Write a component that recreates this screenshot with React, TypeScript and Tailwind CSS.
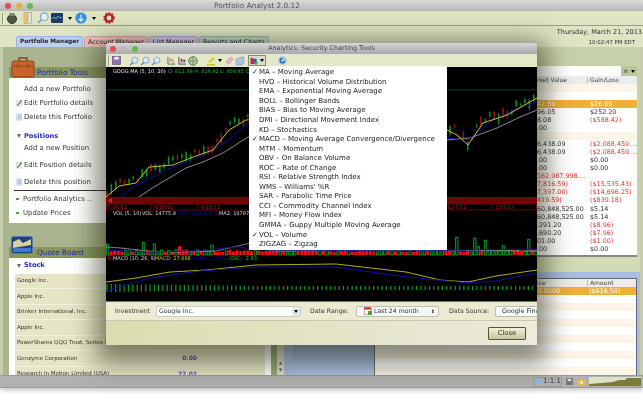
import type { ReactNode } from 'react'

const ui = "font-['DejaVu_Sans',sans-serif]"

type Pt = [number, number]

const yellowLine: Pt[] = [[106, 197], [119, 186], [136, 183], [149, 167], [173, 165], [193, 157], [213, 150], [229, 130], [246, 120], [300, 118], [400, 122], [447, 130], [457, 135], [468, 145], [483, 123], [507, 115], [537, 98]]
const blueLine: Pt[] = [[106, 207], [136, 185], [173, 167], [209, 153], [229, 140], [248, 123], [300, 120], [400, 126], [447, 138], [468, 140], [490, 122], [518, 108], [537, 102]]
const grayLine: Pt[] = [[125, 207], [149, 190], [186, 168], [203, 162], [223, 153], [248, 137], [300, 130], [400, 134], [447, 140], [470, 138], [497, 128], [520, 117], [537, 110]]

function toPoints(line: Pt[]) {
  return line.map(([x, y]) => `${x - 106},${y - 67}`).join(' ')
}

function yAt(line: Pt[], x: number) {
  for (let i = 1; i < line.length; i++) {
    if (x <= line[i][0]) {
      const [x0, y0] = line[i - 1]
      const [x1, y1] = line[i]
      return y0 + ((x - x0) / (x1 - x0)) * (y1 - y0)
    }
  }
  return line[line.length - 1][1]
}

// small seeded generator so the bars stay put between renders
function seeded(seed: number) {
  let s = seed
  return () => {
    s = (s * 16807) % 2147483647
    return s / 2147483647
  }
}

function PriceBars() {
  const rnd = seeded(41)
  const bars = []
  for (let x = 107; x < 537; x += 4.4) {
    const mid = yAt(yellowLine, x) - 67
    const up = rnd() > 0.4
    const top = mid - 2 - rnd() * 9
    const h = 5 + rnd() * 8
    bars.push(
      <g key={x} stroke={up ? '#0c9a26' : '#a01616'} fill={up ? '#0c9a26' : '#a01616'}>
        <line x1={x - 106} x2={x - 106} y1={top} y2={top + h} strokeWidth="0.5" />
        <rect x={x - 106.6} y={top + 2} width="1.2" height={h - 4} strokeWidth="0.2" />
      </g>,
    )
  }
  return <>{bars}</>
}

function VolumeBars() {
  const rnd = seeded(97)
  const bars = []
  for (let x = 106; x < 537; x += 3.6) {
    const red = rnd() > 0.45
    const tall = rnd() > (red ? 0.93 : 0.72)
    const h = tall ? 8 + rnd() * 10 : 3 + rnd() * 2.5
    bars.push(
      red ? (
        <rect key={x} x={x - 106} y={188 - h} width="3" height={h} fill="#f01010" />
      ) : (
        <rect key={x} x={x - 106 + 0.4} y={188 - h} width="2.4" height={h} fill="#021" stroke="#12a52a" strokeWidth="0.8" />
      ),
    )
  }
  return <>{bars}</>
}

function MacdBars() {
  const bars = []
  for (let x = 107; x < 537; x += 4.3) {
    const h = x < 250 ? 8 - (x - 107) / 40 : 4
    bars.push(<line key={x} x1={x - 106} x2={x - 106} y1={221 - h / 2} y2={221 + h / 2} stroke="#0e9a26" strokeWidth="1.2" />)
  }
  return <>{bars}</>
}

function SecurityChart() {
  const labelClass = 'text-[5px]'
  return (
    <svg viewBox="0 0 431 235" className={`block h-[235px] w-full bg-black ${ui}`}>
      <line x1="0" x2="431" y1="23" y2="23" stroke="#0c4a4a" strokeWidth="0.8" />
      <text x="7" y="5.5" fill="#e8e8e8" className={labelClass}>GOOG MA (5, 10, 20)</text>
      <text x="62" y="5.5" fill="#12c22e" className={labelClass}>O: 811.39  H: 816.92  L: 809.85  C: 815.71</text>
      <PriceBars />
      <polyline points={toPoints(grayLine)} fill="none" stroke="#9c9c9c" strokeWidth="0.9" />
      <polyline points={toPoints(blueLine)} fill="none" stroke="#10109c" strokeWidth="1" />
      <polyline points={toPoints(yellowLine)} fill="none" stroke="#c8c020" strokeWidth="1" />

      <rect x="0" y="130" width="431" height="7" fill="#6f0505" />
      <rect x="0.5" y="137" width="430" height="6" fill="#000" stroke="#7a0a0a" strokeWidth="0.8" />
      {[45, 92, 144, 338, 386].map((x) => (
        <line key={x} x1={x} x2={x} y1="137" y2="143" stroke="#7a0a0a" strokeWidth="0.8" />
      ))}
      <path d="M2 133.5 L6 131 L6 136 Z" fill="#e02020" />
      <g fill="#a81818" className="text-[5px]">
        <text x="2" y="142">7/26/12</text>
        <text x="48" y="142">8/18/12</text>
        <text x="95" y="142">9/18/12</text>
        <text x="341" y="142">12/7/11</text>
        <text x="389" y="142">1/18/13</text>
      </g>

      <text x="7" y="148" fill="#d8d8d8" className={labelClass}>VOL (5, 10)</text>
      <text x="36" y="148" fill="#d8d8d8" className={labelClass}>VOL: 14775.9</text>
      <text x="71" y="148" fill="#10109c" className={labelClass}>MA1: 19956.472</text>
      <text x="113" y="148" fill="#d8d8d8" className={labelClass}>MA2: 19787.6</text>
      <VolumeBars />
      <polyline points="0,180 15,181 40,184 70,185 110,184 145,176 165,184 300,183 431,184" fill="none" stroke="#9c9c9c" strokeWidth="0.8" />
      <polyline points="0,183 40,185 90,184 130,180 160,183 300,184 431,182" fill="none" stroke="#10109c" strokeWidth="0.9" />

      <rect x="2.5" y="188.5" width="3.5" height="3.5" fill="none" stroke="#b01818" strokeWidth="0.7" />
      <text x="7" y="193" fill="#d8d8d8" className={labelClass}>MACD (10, 26, 9)</text>
      <text x="49" y="193" fill="#c8c020" className={labelClass}>MACD: 27.688</text>
      <text x="85" y="193" fill="#10109c" className={labelClass}>SIGNAL: 30.518</text>
      <text x="124" y="193" fill="#12c22e" className={labelClass}>OSC: -2.83</text>
      <MacdBars />
      <polyline points="0,215 30,211 64,205 100,203 150,198 230,197 300,205 334,213 362,215 390,209 431,203" fill="none" stroke="#b4ac18" strokeWidth="1" />
      <polyline points="0,224 44,211 94,204 150,200 230,200 300,210 362,216 390,214 431,206" fill="none" stroke="#10109c" strokeWidth="1" />
      <line x1="0" x2="431" y1="234.5" y2="234.5" stroke="#d84060" strokeWidth="1" />
    </svg>
  )
}

function Magnifier({ tone = '#8fb0d8' }: { tone?: string }) {
  return (
    <svg viewBox="0 0 12 12" className="h-[10px] w-[10px]">
      <circle cx="7" cy="5" r="3.6" fill="#dbe8f6" stroke={tone} strokeWidth="1.3" />
      <line x1="4.4" y1="7.8" x2="1.4" y2="11" stroke="#5c7ca8" strokeWidth="1.6" />
    </svg>
  )
}

function Caret() {
  return <span className="inline-block h-0 w-0 border-x-[2px] border-t-[3px] border-x-transparent border-t-black" />
}

function Separator() {
  return <span className="h-[11px] w-[2px] border-x border-l-[#8f9778] border-r-[#f3f5e4]" />
}

function MainToolbar() {
  return (
    <div className="flex h-[15px] items-center border-b border-[#9aa085] bg-[#dfe5c2] pl-[2px]">
      <Separator />
      <svg viewBox="0 0 12 12" className="ml-[2px] h-[12px] w-[12px]">
        <circle cx="6" cy="7" r="4.5" fill="#4f5a44" stroke="#2f3629" />
        <rect x="3.5" y="1" width="5" height="3" fill="#7c8770" />
      </svg>
      <svg viewBox="0 0 10 12" className="ml-[5px] h-[12px] w-[10px]">
        <rect x="1" y="0.5" width="3" height="11" fill="#f1c878" stroke="#b8914c" strokeWidth="0.5" />
        <rect x="5" y="0.5" width="3.5" height="11" fill="#e8e4d8" stroke="#8e8a80" strokeWidth="0.5" />
      </svg>
      <svg viewBox="0 0 12 12" className="ml-[4px] h-[12px] w-[12px]">
        <circle cx="7.3" cy="4.7" r="3.8" fill="#e6f0f8" stroke="#7fa3c6" strokeWidth="1.2" />
        <line x1="4.4" y1="7.6" x2="1" y2="11" stroke="#7fa3c6" strokeWidth="1.6" />
      </svg>
      <svg viewBox="0 0 12 10" className="ml-[2px] h-[10px] w-[12px]">
        <rect width="12" height="10" rx="1" fill="#1c3c66" />
        <path d="M1 6 L3 4 L5 6 L7 3 L9 5 L11 4" stroke="#9ec0e8" strokeWidth="0.8" fill="none" />
      </svg>
      <span className="ml-[5px] flex"><Caret /></span>
      <svg viewBox="0 0 12 12" className="ml-[3px] h-[12px] w-[12px]">
        <circle cx="6" cy="6" r="5.6" fill="#2f8fd8" stroke="#7cbde8" strokeWidth="0.6" />
        <path d="M6 2.4 V9 M3.6 6.6 L6 9.2 L8.4 6.6" stroke="#f4f8fc" strokeWidth="1.1" fill="none" />
      </svg>
      <span className="ml-[5px] flex"><Caret /></span>
      <svg viewBox="0 0 12 12" className="ml-[7px] h-[12px] w-[12px]">
        <circle cx="6" cy="6" r="3.6" fill="none" stroke="#b8202c" strokeWidth="2.4" />
        <circle cx="6" cy="6" r="5" fill="none" stroke="#b8202c" strokeWidth="1.6" strokeDasharray="1.6 1.6" />
      </svg>
    </div>
  )
}

function ManagerTab({ label, className }: { label: string; className: string }) {
  return (
    <div className={`flex h-[11px] items-center rounded-t-[3px] border border-b-0 px-[3px] leading-none whitespace-nowrap text-[#222] ${className}`}>
      {label}
    </div>
  )
}

function Pencil() {
  return (
    <svg viewBox="0 0 8 8" className="h-[8px] w-[7px] shrink-0">
      <rect x="1" y="1" width="5.5" height="6.5" fill="#f4f4f0" stroke="#9a9a90" strokeWidth="0.4" />
      <path d="M1.5 7 L6.5 1" stroke="#2f8a2f" strokeWidth="1.3" />
    </svg>
  )
}

function PageIcon() {
  return (
    <svg viewBox="0 0 8 8" className="h-[8px] w-[7px] shrink-0">
      <rect x="1" y="0.5" width="5.5" height="7" fill="#e8f0fa" stroke="#7f9cc0" strokeWidth="0.5" />
      <path d="M2 2.5 H5.5 M2 4 H5.5 M2 5.5 H5" stroke="#3b6ca8" strokeWidth="0.5" />
    </svg>
  )
}

function ToolRow({ icon, label, className = '' }: { icon?: ReactNode; label: string; className?: string }) {
  return (
    <div className={`flex h-[10px] items-center text-[6.9px] leading-none whitespace-nowrap text-[#333] ${className}`}>
      <span className="flex w-[15px] justify-end pr-[1px]">{icon}</span>
      <span>{label}</span>
    </div>
  )
}

function GreenBullet({ label, className = '' }: { label: string; className?: string }) {
  return (
    <div className={`flex h-[10px] items-center gap-[4px] pl-[7px] text-[6.9px] leading-none whitespace-nowrap text-[#333] ${className}`}>
      <span className="h-[1.5px] w-[3px] bg-[#4c9a3a]" />
      {label}
    </div>
  )
}

function SectionTitle({ label, className = '' }: { label: string; className?: string }) {
  return (
    <div className={`flex h-[10px] items-center gap-[3px] pl-[8px] text-[6.6px] leading-none font-bold text-[#2626c8] ${className}`}>
      <span className="h-0 w-0 border-x-[2.5px] border-t-[4px] border-x-transparent border-t-[#666]" />
      {label}
    </div>
  )
}

function PanelHeader({ title, icon }: { title: string; icon: ReactNode }) {
  return (
    <div className="relative flex h-[11px] items-center bg-[#88985c] pl-[28px] text-[7.4px] leading-none text-[#2323b4]">
      <span className="absolute -top-[11px] left-[2px]">{icon}</span>
      {title}
    </div>
  )
}

const quotes = [
  { name: 'Google Inc.', value: '' },
  { name: 'Apple Inc.', value: '' },
  { name: 'Brinker International, Inc.', value: '' },
  { name: 'Apple Inc.', value: '' },
  { name: 'PowerShares QQQ Trust, Series 1', value: '' },
  { name: 'Genzyme Corporation', value: '0.00' },
  { name: 'Research In Motion Limited (USA)', value: '72.07' },
]

function LeftColumn() {
  return (
    <div className={`flex w-[281px] shrink-0 flex-col bg-[#a9b58f] pt-[20px] pl-[6px] ${ui}`}>
      <PanelHeader
        title="Portfolio Tools"
        icon={
          <svg viewBox="0 0 24 22" className="h-[22px] w-[24px]">
            <rect x="1" y="5" width="22" height="16" rx="2" fill="#c8642a" stroke="#8c4018" />
            <path d="M8 5 V2 H16 V5" fill="none" stroke="#8c4018" strokeWidth="1.4" />
            <path d="M1 10 H23 M7 7 V12 M17 7 V12" stroke="#8c4018" strokeWidth="0.8" />
          </svg>
        }
      />
      <div className="h-[145px] bg-white pt-[6px]">
        <ToolRow label="Add a new Portfolio" />
        <ToolRow icon={<Pencil />} label="Edit Portfolio details" className="mt-[4px]" />
        <ToolRow icon={<PageIcon />} label="Delete this Portfolio" className="mt-[4px]" />
        <SectionTitle label="Positions" className="mt-[9px]" />
        <ToolRow label="Add a new Position" className="mt-[2px]" />
        <ToolRow icon={<Pencil />} label="Edit Position details" className="mt-[7px]" />
        <ToolRow icon={<PageIcon />} label="Delete this position" className="mt-[7px]" />
        <div className="mt-[3px] ml-[5px] h-px bg-[#333]" />
        <GreenBullet label="Portfolio Analytics .." className="mt-[3px]" />
        <GreenBullet label="Update Prices" className="mt-[4px]" />
      </div>
      <div className="h-[24px]" />
      <PanelHeader
        title="Quote Board"
        icon={
          <svg viewBox="0 0 22 18" className="h-[18px] w-[22px]">
            <rect x="0.5" y="0.5" width="21" height="17" rx="2" fill="#20407c" stroke="#5b78a8" />
            <path d="M2 6 L8 3 L12 7 L20 3 V9 L2 12 Z" fill="#d8d0a0" />
            <path d="M2 12 H20 V16 H2 Z" fill="#3c7ad0" />
          </svg>
        }
      />
      <div className="relative h-[117px] overflow-hidden bg-white">
        <SectionTitle label="Stock" className="h-[15.5px]" />
        {quotes.map((quote, i) => (
          <div key={i} className="mr-[19px] ml-[6px] flex h-[15.5px] items-center justify-between border-b border-[#f2f2e4] bg-[#e6e6c6] pr-[68px] pl-[2px] text-[5.5px] leading-none whitespace-nowrap text-[#333]">
            <span>{quote.name}</span>
            <span className="text-[6px] font-bold text-[#4a4ac4]">{quote.value}</span>
          </div>
        ))}
        <div className="absolute top-0 right-[7px] h-full w-[6px] bg-[#97a878]" />
        <div className="absolute top-0 right-0 flex h-full w-[7px] flex-col justify-end bg-[#dddccb] pb-[2px]">
          <span className="text-center text-[4px] leading-[7px] text-[#555]">▲</span>
          <span className="text-center text-[4px] leading-[7px] text-[#555]">▼</span>
        </div>
      </div>
    </div>
  )
}

const holdings: { value: string; gain: string; valueRed?: boolean; gainRed?: boolean; tone?: string }[] = [
  { value: '', gain: '', tone: 'bg-[#fbf6e8]' },
  { value: '', gain: '', tone: 'bg-white' },
  { value: '42.59', gain: '$26.09', tone: 'bg-[#eeb136] text-white' },
  { value: '96.05', gain: '$252.20' },
  { value: '8.08', gain: '($588.42)', gainRed: true },
  { value: '.00', gain: '' },
  { value: '', gain: '', tone: 'bg-[#fbf6e8]' },
  { value: '6,438.09', gain: '($2,088,459....', gainRed: true },
  { value: '6,438.09', gain: '($2,088,459....', gainRed: true },
  { value: '.00', gain: '$0.00' },
  { value: '.00', gain: '$0.00' },
  { value: '162,987,998....', gain: '', valueRed: true },
  { value: '7,816.59)', gain: '($15,535.43)', valueRed: true, gainRed: true },
  { value: '7,397.00)', gain: '($14,696.25)', valueRed: true, gainRed: true },
  { value: '419.59)', gain: '($839.18)', valueRed: true, gainRed: true },
  { value: '60,848,525.00', gain: '$5.14' },
  { value: '60,848,525.00', gain: '$5.14' },
  { value: ',291.20', gain: '($8.96)', gainRed: true },
  { value: ',690.20', gain: '($7.96)', gainRed: true },
  { value: '01.00', gain: '($1.00)', gainRed: true },
  { value: '.00', gain: '$0.00' },
]

function HoldingsTable() {
  return (
    <div className="flex h-[191px] flex-col">
      <div className="flex h-[10px] shrink-0">
        <div className="flex-1 bg-white" />
        <div className="flex w-[16px] items-center justify-center gap-[3px] bg-[#bcc69c] text-[5px] leading-none text-[#444]">
          <span>⚙</span>
          <Caret />
        </div>
      </div>
      <div className="flex flex-1 flex-col overflow-hidden border-b-[2px] border-[#888] bg-white">
        <div className="flex h-[8px] shrink-0 items-center bg-[#ececec] text-[6px] leading-none whitespace-nowrap text-[#444]">
          <span className="w-[303px] shrink-0 pl-[244px]">Market Value</span>
          <span className="border-l border-[#bbb] pl-[2px]">Gain/Loss</span>
        </div>
        {holdings.map((row, i) => (
          <div key={i} className={`flex h-[8.05px] shrink-0 items-center text-[6.4px] leading-none whitespace-nowrap text-[#333] ${row.tone ?? ''}`}>
            <span className={`w-[306px] shrink-0 pl-[253px] ${row.valueRed ? 'text-[#f03030]' : ''}`}>{row.value}</span>
            <span className={row.gainRed ? 'text-[#f03030]' : ''}>{row.gain}</span>
          </div>
        ))}
      </div>
    </div>
  )
}

function TransactionsTable() {
  return (
    <div className="flex flex-1 flex-col bg-[#d2dbb3] pt-[15px] pb-[2px]">
      <div className="flex flex-1 items-stretch border-x-[3px] border-t-[6px] border-b border-[#a9bde2] bg-[#a9bde2]">
        <div className="ml-[6px] w-[81px] shrink-0 bg-[linear-gradient(#6d7fa4,#b0c4e6)]" />
        <div className="flex flex-1 flex-col overflow-hidden border border-[#666] bg-white">
          <div className="flex h-[8px] shrink-0 items-center bg-[#ececec] text-[6px] leading-none text-[#444]">
            <span className="w-[212px] shrink-0 pl-[156px]">Price</span>
            <span className="border-l border-[#bbb] pl-[2px]">Amount</span>
          </div>
          <div className="flex h-[8px] shrink-0 items-center bg-[#eeb136] text-[6.4px] leading-none text-white">
            <span className="w-[213px] shrink-0 pl-[148px]">($616.5000</span>
            <span className="pl-[1px]">($616.50)</span>
          </div>
          {[0, 1, 2, 3, 4, 5, 6, 7, 8, 9].map((i) => (
            <div key={i} className={`h-[8px] shrink-0 ${i % 2 === 0 ? 'bg-white' : 'bg-[#fbf6e8]'}`} />
          ))}
        </div>
      </div>
    </div>
  )
}

function StatusBar() {
  return (
    <div className={`flex h-[13px] items-center justify-end border-y border-[#999] bg-[#b1b1b1] pr-[2px] ${ui}`}>
      <div className="flex h-[10px] w-[29px] items-center gap-[2px] border border-[#9c9c9c] pl-[2px] text-[7px] leading-none text-[#333]">
        <span className="h-[5px] w-[5px] bg-[#8fb8e0]" />
        1:1:1
      </div>
      <svg viewBox="0 0 8 8" className="ml-[4px] h-[7px] w-[7px]">
        <rect width="8" height="8" rx="1" fill="#777" />
        <rect x="2" y="1" width="4" height="2.5" fill="#ddd" />
      </svg>
      <svg viewBox="0 0 8 8" className="ml-[5px] h-[7px] w-[7px]">
        <rect y="2" width="8" height="6" fill="#e8c040" />
        <circle cx="4" cy="5" r="1.4" fill="#fff" />
      </svg>
      <svg viewBox="0 0 52 9" className="ml-[4px] h-[9px] w-[52px]">
        <rect width="52" height="9" fill="#dfe0c8" />
        <path d="M0 9 V7 L12 6 L24 5 L30 3 L36 3 L38 1 L52 1 V9 Z" fill="#7a7c3c" />
      </svg>
    </div>
  )
}

const indicators = [
  { label: 'MA – Moving Average', checked: true },
  { label: 'HVD – Historical Volume Distribution' },
  { label: 'EMA – Exponential Moving Average' },
  { label: 'BOLL – Bollinger Bands' },
  { label: 'BIAS – Bias to Moving Average' },
  { label: 'DMI – Directional Movement Index' },
  { label: 'KD – Stochastics' },
  { label: 'MACD – Moving Average Convergence/Divergence', checked: true },
  { label: 'MTM – Momentum' },
  { label: 'OBV – On Balance Volume' },
  { label: 'ROC – Rate of Change' },
  { label: 'RSI – Relative Strength Index' },
  { label: "WMS – Williams' %R" },
  { label: 'SAR – Parabolic Time Price' },
  { label: 'CCI – Commodity Channel Index' },
  { label: 'MFI – Money Flow Index' },
  { label: 'GMMA – Guppy Multiple Moving Average' },
  { label: 'VOL – Volume', checked: true },
  { label: 'ZIGZAG – Zigzag' },
]

function IndicatorMenu() {
  return (
    <div className={`absolute top-[23px] left-[143px] h-[184px] w-[198px] bg-white pt-[2px] text-[7px] leading-none whitespace-nowrap text-[#222] ${ui}`}>
      {indicators.map((item) => (
        <div key={item.label} className="flex h-[9.55px] items-center">
          <span className="w-[10px] pl-[3px] text-[7px]">{item.checked ? '✓' : ''}</span>
          <span>{item.label}</span>
        </div>
      ))}
    </div>
  )
}

function DialogToolbar() {
  return (
    <div className="flex h-[13px] items-center bg-[#e4e7c8] pl-[2px]">
      <Separator />
      <svg viewBox="0 0 10 10" className="ml-[2px] h-[9px] w-[9px]">
        <rect x="0.5" y="0.5" width="9" height="9" fill="#8b6fae" stroke="#5a4080" strokeWidth="0.6" />
        <rect x="2.5" y="1" width="5" height="3" fill="#eee" />
      </svg>
      <span className="ml-[8px]"><Magnifier /></span>
      <span className="ml-[1px]"><Magnifier /></span>
      <span className="ml-[1px]"><Magnifier /></span>
      <svg viewBox="0 0 10 10" className="ml-[6px] h-[9px] w-[9px]">
        <path d="M1 1 V9 H9" stroke="#4a7a50" fill="none" />
        <path d="M2 7 L5 3 L8 6 M2 3 L8 8" stroke="#c86060" strokeWidth="0.9" fill="none" />
      </svg>
      <svg viewBox="0 0 10 10" className="ml-[2px] h-[9px] w-[9px]">
        <path d="M1 1 V9 H9" stroke="#444" fill="none" />
        <rect x="3" y="3" width="2" height="4" fill="#c03030" />
        <rect x="6" y="4" width="2" height="3" fill="#3050b0" />
      </svg>
      <svg viewBox="0 0 10 10" className="ml-[1px] h-[10px] w-[10px]">
        <circle cx="5" cy="5" r="4.3" fill="#b8c8a0" stroke="#6c8060" />
        <path d="M5 0.5 V9.5 M0.5 5 H9.5" stroke="#6c8060" strokeWidth="0.7" />
      </svg>
      <svg viewBox="0 0 10 10" className="ml-[8px] h-[10px] w-[10px]">
        <path d="M2 6 L7 1 L9 2 L4 7 Z" fill="#e4d018" />
        <line x1="1" y1="8.8" x2="9" y2="8.8" stroke="#d8c400" strokeWidth="1.4" />
      </svg>
      <span className="ml-[2px] flex"><Caret /></span>
      <svg viewBox="0 0 10 10" className="ml-[3px] h-[9px] w-[9px]">
        <path d="M1 6.5 L6 1 L9 3.5 L4 9 Z" fill="#f0b0b8" stroke="#b08088" strokeWidth="0.5" />
      </svg>
      <svg viewBox="0 0 10 10" className="ml-px h-[10px] w-[10px]">
        <path d="M1 3 L7 1 H9 V7 L7 9 H1 Z" fill="#a8c4e4" stroke="#7090b8" strokeWidth="0.5" />
      </svg>
      <div className="ml-[3px] flex h-[11px] w-[18px] items-center gap-[2px] border border-[#8a8a78] bg-[#dcdcc8] pl-px">
        <svg viewBox="0 0 9 9" className="h-[8px] w-[8px]">
          <rect x="0.5" y="1" width="3" height="7" fill="#c83030" />
          <rect x="3.5" y="2" width="4" height="6" fill="#3058c0" />
          <circle cx="7" cy="7" r="1.6" fill="#50b040" />
        </svg>
        <Caret />
      </div>
      <svg viewBox="0 0 10 10" className="ml-[12px] h-[9px] w-[9px]">
        <circle cx="5" cy="5" r="4.6" fill="#9cc8ec" />
        <path d="M7.5 5 A2.5 2.5 0 1 1 5 2.5" stroke="#1c70b8" strokeWidth="1.5" fill="none" />
      </svg>
    </div>
  )
}

function AnalyticsDialog() {
  return (
    <div className={`absolute top-[43px] left-[106px] w-[431px] rounded-t-[3px] shadow-[0_8px_26px_10px_rgba(30,30,10,0.55)] ${ui}`}>
      <div className="relative flex h-[11px] items-center justify-center rounded-t-[3px] bg-[linear-gradient(#d6d6d6,#a9a9a9)] text-[6.4px] leading-none text-[#444]">
        <span className="absolute left-[4px] flex gap-[5px]">
          <span className="h-[6px] w-[6px] rounded-full bg-[#e8484e]" />
          <span className="h-[6px] w-[6px] rounded-full bg-[#b8b8b8]" />
          <span className="h-[6px] w-[6px] rounded-full bg-[#66b84c]" />
        </span>
        Analytics: Security Charting Tools
      </div>
      <DialogToolbar />
      <SecurityChart />
      <IndicatorMenu />
      <div className="flex h-[18px] items-center overflow-hidden bg-[#ecebd2] pl-[9px] text-[6.2px] leading-none whitespace-nowrap text-[#333]">
        <span className="w-[41px] shrink-0">Investment</span>
        <div className="flex h-[11px] w-[145px] shrink-0 items-center justify-between rounded-[1px] border border-[#ccc] bg-white pl-[2px] text-[6.2px]">
          Google Inc.
          <span className="flex h-full w-[8px] items-center justify-center bg-[#e8e8e8]"><Caret /></span>
        </div>
        <span className="ml-[9px] w-[46px] shrink-0">Date Range:</span>
        <div className="flex h-[11px] w-[83px] shrink-0 items-center justify-between rounded-[2px] border border-[#bbb] bg-[#f6f6f2] pr-[3px] pl-[7px] text-[6.2px]">
          <span className="flex items-center gap-[2px]">
            <svg viewBox="0 0 8 8" className="h-[8px] w-[8px]">
              <rect width="7" height="7" y="1" fill="#fff" stroke="#c03030" strokeWidth="0.8" />
              <rect width="7" height="2" y="0.5" fill="#c03030" />
              <rect x="4" y="4" width="4" height="4" fill="#50a040" />
            </svg>
            Last 24 month
          </span>
          <span className="text-[5px]">⬍</span>
        </div>
        <span className="ml-[10px] w-[46px] shrink-0">Data Source:</span>
        <div className="flex h-[11px] w-[60px] shrink-0 items-center rounded-[2px] border border-[#bbb] bg-[#f8f8f4] pl-[6px] text-[6.4px]">Google Finance</div>
      </div>
      <div className="flex h-[25px] items-center justify-end border-t border-[#c8c8b0] bg-[linear-gradient(90deg,#dcdcb0,#ecebdc)] pr-[11px]">
        <div className="flex h-[13px] w-[38px] items-center justify-center rounded-[1px] border border-[#55553f] bg-[linear-gradient(#f2f0d8,#c8c69c)] text-[6.8px] leading-none text-[#333]">Close</div>
      </div>
    </div>
  )
}

export default function App() {
  return (
    <div className="relative h-[402px] w-[643px] overflow-hidden bg-white blur-[0.35px]">
      <div className="flex h-[388px] flex-col shadow-[0_2px_5px_rgba(0,0,0,0.25)]">
        <div className={`relative flex h-[11px] items-center justify-center bg-[linear-gradient(#dcdcdc,#b6b6b6)] pr-[129px] text-[7.4px] leading-none text-[#555] ${ui}`}>
          <span className="absolute left-[5px] flex gap-[5px]">
            <span className="h-[6px] w-[6px] rounded-full bg-[#e8484e]" />
            <span className="h-[6px] w-[6px] rounded-full bg-[#e8b030]" />
            <span className="h-[6px] w-[6px] rounded-full bg-[#66b84c]" />
          </span>
          Portfolio Analyst 2.0.12
        </div>
        <MainToolbar />
        <div className={`flex h-[21px] items-end justify-between bg-[#dfe5c4] pl-[16px] ${ui}`}>
          <div className="flex gap-px">
            <ManagerTab label="Portfolio Manager" className="border-[#9fb4dc] bg-[#bcd0f0] text-[5.8px] font-bold" />
            <ManagerTab label="Account Manager" className="border-[#d8a0a0] bg-[#f4c0c0] text-[6.4px]" />
            <ManagerTab label="List Manager" className="border-[#b0a0d0] bg-[#d4c8ee] text-[6.4px]" />
            <ManagerTab label="Reports and Charts" className="border-[#98b8a8] bg-[#bcd8c8] text-[6.4px]" />
          </div>
          <div className="self-start pt-px pr-px text-right whitespace-nowrap text-[#333]">
            <div className="text-[6.5px] leading-[10px]">Thursday, March 21, 2013</div>
            <div className="pt-[2px] pr-[7px] text-[5.4px] leading-[6px]">10:02:47 PM EDT</div>
          </div>
        </div>
        <div className="flex flex-1 overflow-hidden border-x-[3px] border-[#c6ceae]">
          <LeftColumn />
          <div className={`flex flex-1 flex-col bg-[#c8d2aa] pt-[19px] ${ui}`}>
            <div className="pr-[3px]">
              <HoldingsTable />
            </div>
            <TransactionsTable />
          </div>
        </div>
        <StatusBar />
      </div>
      <AnalyticsDialog />
    </div>
  )
}
